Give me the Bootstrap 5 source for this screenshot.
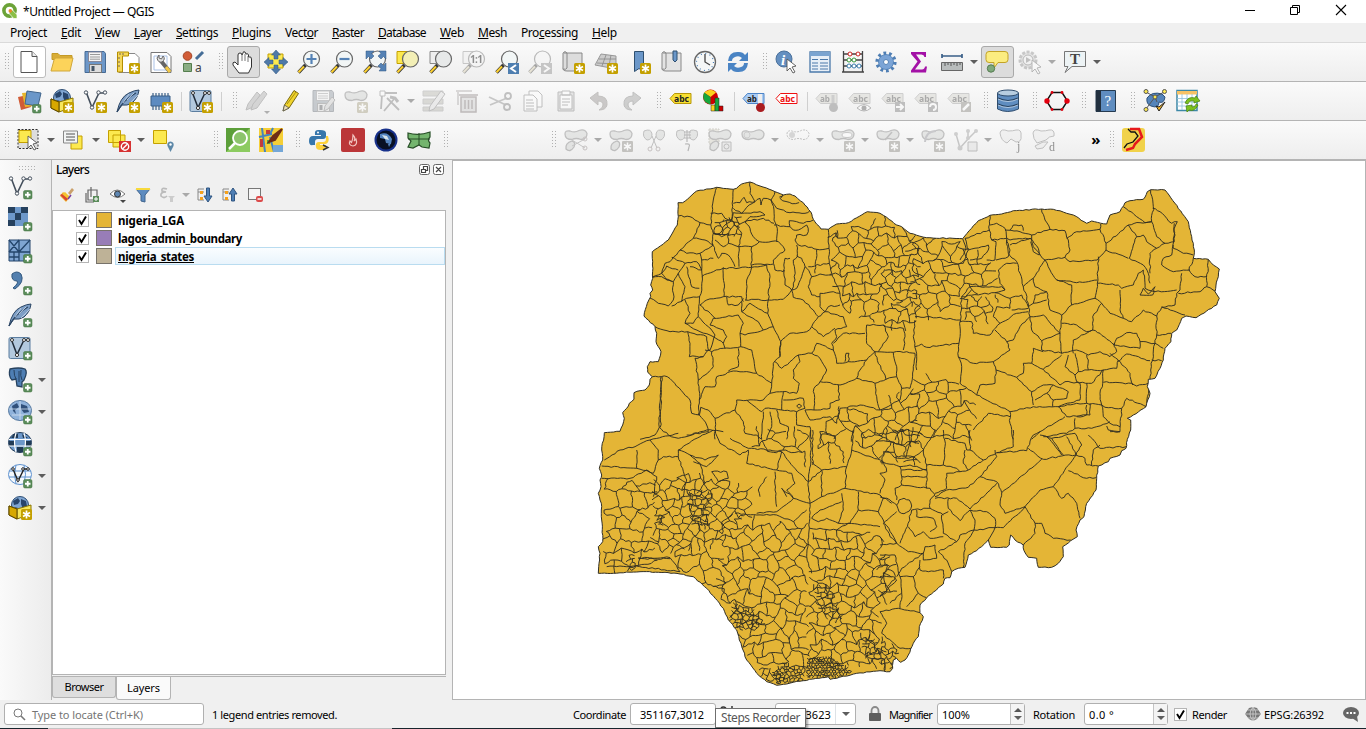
<!DOCTYPE html>
<html lang="en">
<head>
<meta charset="utf-8">
<meta name="viewport" content="width=device-width, initial-scale=1">
<title>*Untitled Project — QGIS</title>
<link href="https://cdn.jsdelivr.net/npm/bootstrap@5.3.0/dist/css/bootstrap.min.css" rel="stylesheet">
<style>
body{height:729px;overflow:hidden;background:#f0f0f0;color:#000;font:12px/16px "Noto Sans","Open Sans",sans-serif}
svg{display:block;overflow:visible}
.titlebar{height:23px;background:#fff}
.winctl svg{width:46px;height:23px}
.menubar{height:20px;padding-left:10px;gap:14px;border-bottom:1px solid #dadada;white-space:nowrap}
.menubar a{color:#000;text-decoration:none}
.fit{display:inline-block;white-space:nowrap}
.tools{height:39px;background:linear-gradient(#fafafa,#eeeeee);border-bottom:1px solid #b4b4b4}
.tool{width:33px;height:32px;padding:0;border:1px solid transparent;border-radius:3px;display:flex;align-items:center;justify-content:center;background:none;flex:none}
.tool svg,.side svg{width:24px;height:24px;flex:none}
.tool.off svg{opacity:.42;filter:grayscale(.8)}
.tool.on{background:#dcdcdc;border-color:#a9a9a9}
.tool.raised{background:#fff;border-color:#bcbcbc}
.grip{width:16px;height:18px;flex:none}
.grip::before,.gripbar{content:"";display:block;background:radial-gradient(circle at .5px .5px,#b0b0b0 .6px,transparent .8px) 0 0/3px 3px}
.grip::before{width:4px;height:18px;margin-left:8px}
.gripbar{width:17px;height:5px;margin:6px 0 0 19px}
.start{width:12.5px;overflow:hidden;display:flex;justify-content:end}
.sep{width:7px;height:19px;flex:none;border-left:1px solid #cfcfcf;margin-left:3px;margin-right:-3px}
.drop{width:12px;flex:none;display:flex;justify-content:center;margin-left:-1px;margin-right:1px}
.drop::after,.tri{content:"";border:4px solid transparent;border-top-color:#5d5d5d;border-bottom:0}
.drop.off::after{border-top-color:#a9a9a9}
.work{height:540px}
.side{width:52px;background:linear-gradient(90deg,#fafafa,#ececec);border-right:1px solid #b4b4b4}
.side .slot{height:32.1px;padding-left:8px}
.side .drop{margin-left:4px}
.dock{width:394px}
.dock h2{font-size:12px;height:20px;margin:0;padding:2px 0 0 4px;line-height:16px}
.docktools{height:30px;padding:0 0 0 7px;gap:9.3px}
.docktools svg{width:16px;height:16px}
.tree{height:465px;background:#fff;border:1px solid #b4b4b4}
.node{height:18px;padding-left:23px}
.chk{width:13px;height:13px;background:#fff;border:1px solid #b5b5b5;flex:none}
.swatch{width:16px;height:16px;border:1px solid #77726a;flex:none;margin:0 3px 0 7px}
.node b{flex:1;height:18px;line-height:17px;padding-left:2px;font-size:11.5px;border:1px solid transparent}
.node.cur b{background:linear-gradient(#fafdff,#e9f4fc);border-color:#b9dcf0}
.tabs{height:25px;border-top:1px solid #b4b4b4;margin-top:1px}
.tabs div{border:1px solid #b4b4b4;border-top:0;border-radius:0 0 3px 3px;font-size:11px;text-align:center}
.canvas{margin-left:6px;background:#fff;border:1px solid #b4b4b4;flex:1;height:540px}
.status{height:27px;font-size:11px;padding:1px 0 0 4px}
.status .fit{padding-top:1px}
.box{height:22px;background:#fff;border:1px solid #b0b0b0;border-radius:3px;flex:none}
.spin{width:14px;height:100%;border-left:1px solid #c4c4c4;background:#f4f4f4;gap:4px}
.up{border:4px solid transparent;border-bottom-color:#555;border-top:0}
.tip{position:absolute;left:715px;top:708px;width:91px;height:20px;background:#fff;border:1px solid #6f6f6f;box-shadow:2px 2px 2px #0005;color:#575757;font-size:12px;line-height:18px;text-align:center}
.taskedge{height:2px;background:linear-gradient(90deg,#17252d 48px,#c4c4c4 48px 392px,#17252d 392px);background-size:100% 1px;background-position:0 100%;background-repeat:no-repeat}
</style>
</head>
<body>
<header>
  <div class="titlebar d-flex align-items-center">
    <svg width="23" height="23" viewBox="0 0 23 23"><circle cx="9.500" cy="10.500" r="5.600" fill="none" stroke="#6ca338" stroke-width="3.600"/><path d="M9.500 10.500l2.500-.8 5 5v3.800h-3.300l-4.500-5z" fill="#8bbf45" stroke="#fff" stroke-width=".7"/><circle cx="10.300" cy="10.900" r="1.800" fill="#e88a2a"/></svg>
    <span class="fit" data-w="131">*Untitled Project — QGIS</span>
    <div class="winctl d-flex ms-auto">
      <svg viewBox="0 0 46 23"><path d="M17 10.500h10" stroke="#000"/></svg>
      <svg viewBox="0 0 46 23"><path d="M16.500 7.500h7v7h-7zM18.500 7.500v-2h7v7h-2" fill="none" stroke="#000"/></svg>
      <svg viewBox="0 0 46 23"><path d="M16 5l10 10M26 5l-10 10" stroke="#000" stroke-width="1.100"/></svg>
    </div>
  </div>
  <nav class="menubar d-flex align-items-center">
    <a class="fit" data-w="37">Pro<u>j</u>ect</a><a class="fit" data-w="20"><u>E</u>dit</a><a class="fit" data-w="25"><u>V</u>iew</a><a class="fit" data-w="28"><u>L</u>ayer</a><a class="fit" data-w="42"><u>S</u>ettings</a><a class="fit" data-w="39"><u>P</u>lugins</a><a class="fit" data-w="33">Vect<u>o</u>r</a><a class="fit" data-w="32"><u>R</u>aster</a><a class="fit" data-w="48"><u>D</u>atabase</a><a class="fit" data-w="24"><u>W</u>eb</a><a class="fit" data-w="29"><u>M</u>esh</a><a class="fit" data-w="57">Pro<u>c</u>essing</a><a class="fit" data-w="25"><u>H</u>elp</a>
  </nav>
  <div class="tools d-flex align-items-center" data-items="^new open save layout layoutmgr style | =pan pansel zoomin zoomout zoomfull zoomsel zoomlayer ~zoom11 zoomlast ~zoomnext newmap new3d bookmark bookmarks clock refresh | identify table abacus gear sigma ruler v =tip ~action V textanno v"></div>
  <div class="tools d-flex align-items-center" data-items="datasource geopackage newshape newquill chip / virtual / | ~pencils pencil ~savedit ~addpoly ~vertex V ~modify ~trash ~cut ~copy ~paste ~undo ~redo | label diagram / labelpin labelred / ~labelpin2 ~labeleye ~labelmove ~labelrot ~labeledit | db | hexagon | help | topology tablerefresh"></div>
  <div class="tools d-flex align-items-center" data-items="select v selform v deselect v selloc _25 | search osm | python fire globe greenmap | _92 | ~blob1 V ~blob2 ~blobcut ~bloblace ~blob3 ~blob4 V ~blob5 V ~blob6 V ~blob7 V ~blob8 ~nodes V ~blobj ~blobd _41 | road"></div>
</header>

<main class="work d-flex">
  <aside class="side"><div class="gripbar"></div><div id="side"></div></aside>
  <section class="dock">
    <h2 class="d-flex"><span class="fit" data-w="33">Layers</span>
      <svg class="ms-auto" style="margin-right:1px;margin-top:2px" width="26" height="12" viewBox="0 0 26 12"><g fill="#fff" stroke="#666"><rect x=".5" y=".5" width="10" height="10" rx="2"/><rect x="14.500" y=".5" width="10" height="10" rx="2"/></g><path d="M2.500 5.500h4v3h-4zM4.500 5V2.500h4v4H7M17 3l5 5M22 3l-5 5" fill="none" stroke="#444" stroke-width="1.200"/></svg></h2>
    <div class="docktools d-flex align-items-center" id="docktools"></div>
    <div class="tree">
      <div class="node d-flex align-items-center"><span class="chk"></span><span class="swatch" style="background:#e4b536"></span><b><span class="fit" data-w="66">nigeria_LGA</span></b></div>
      <div class="node d-flex align-items-center"><span class="chk"></span><span class="swatch" style="background:#987db7"></span><b><span class="fit" data-w="124">lagos_admin_boundary</span></b></div>
      <div class="node cur d-flex align-items-center"><span class="chk"></span><span class="swatch" style="background:#beb297"></span><b><u class="fit" data-w="76">nigeria_states</u></b></div>
    </div>
    <div class="tabs d-flex align-items-start">
      <div style="width:64px;height:21px;background:#dedede;line-height:20px"><span class="fit" data-w="39">Browser</span></div>
      <div style="width:55px;height:23px;background:#fafafa;line-height:22px"><span class="fit" data-w="33">Layers</span></div>
    </div>
  </section>
  <section class="canvas"><svg id="map" width="912" height="538" viewBox="453 161 912 538"></svg></section>
</main>

<footer class="status d-flex align-items-center">
  <div class="box d-flex align-items-center" style="width:200px;padding-left:8px;color:#757575"><svg width="13" height="13" viewBox="0 0 13 13"><circle cx="5" cy="5" r="4" fill="none" stroke="#777"/><path d="M8 8l4 4" stroke="#777" stroke-width="1.600"/></svg><span class="fit" data-w="111" style="margin-left:6px">Type to locate (Ctrl+K)</span></div>
  <span class="fit" data-w="125" style="margin-left:8px">1 legend entries removed.</span>
  <span class="fit" data-w="53" style="margin-left:236px">Coordinate</span>
  <div class="box" style="width:86px;margin-left:4px;line-height:20px;padding-left:9px"><span class="fit" data-w="64">351167,3012</span></div>
  <svg style="margin-left:4px" width="14" height="14" viewBox="0 0 14 14"><path d="M1 1q2-2 5 0M12-1v4" fill="none" stroke="#333" stroke-width="1.500"/></svg>
  <div class="box d-flex align-items-center justify-content-end" style="width:81px;margin-left:41px"><span class="fit" data-w="32">13623</span><span class="d-flex align-items-center justify-content-center h-100 border-start ms-1" style="width:20px"><span class="tri"></span></span></div>
  <svg style="margin-left:12px" width="14" height="16" viewBox="0 0 14 16"><path d="M3.500 8V5a3.500 4 0 0 1 7 0v3" fill="none" stroke="#8a8a8a" stroke-width="1.800"/><rect x="1" y="7" width="12" height="8" rx="1" fill="#5f5f5f"/></svg>
  <span class="fit" data-w="43" style="margin-left:7px">Magnifier</span>
  <div class="box d-flex align-items-center" style="width:88px;margin-left:5px;padding-left:4px"><span class="fit" data-w="28">100%</span><span class="spin ms-auto d-flex flex-column align-items-center justify-content-center"><span class="up"></span><span class="tri"></span></span></div>
  <span class="fit" data-w="42" style="margin-left:8px">Rotation</span>
  <div class="box d-flex align-items-center" style="width:84px;margin-left:9px;padding-left:4px"><span class="fit" data-w="25">0.0 °</span><span class="spin ms-auto d-flex flex-column align-items-center justify-content-center"><span class="up"></span><span class="tri"></span></span></div>
  <span class="chk" style="margin-left:6px"></span>
  <span class="fit" data-w="35" style="margin-left:5px">Render</span>
  <svg style="margin-left:18px" width="16" height="14" viewBox="0 0 16 14"><path d="M8 0l4 1 4 6-4 5-4 2-4-2-4-5 4-6z" fill="#777"/><path d="M0 7h16M8 0v14M3 3h10M3 11h10M8 0Q2 7 8 14Q14 7 8 0" fill="none" stroke="#ddd" stroke-width=".7"/></svg>
  <span class="fit" data-w="60" style="margin-left:3px">EPSG:26392</span>
  <svg style="margin-left:19px" width="16" height="16" viewBox="0 0 16 16"><ellipse cx="8" cy="7" rx="8" ry="6" fill="#666"/><path d="M9 12l6 4-1-6z" fill="#666"/><path d="M3.500 7h2M7 7h2M10.500 7h2" stroke="#fff" stroke-width="2"/></svg>
</footer>
<div class="taskedge"></div>
<div class="tip"><span class="fit" data-w="79">Steps Recorder</span></div>

<script src="https://cdn.jsdelivr.net/npm/bootstrap@5.3.0/dist/js/bootstrap.bundle.min.js"></script>
<script>
// ---- icon parts, all on a 24 x 24 grid ----
const star='<rect x="13" y="13" width="11" height="11" rx="1.500" fill="#c4a000"/><path d="M18.500 14.500v8M15 16.500l7 4M22 16.500l-7 4" stroke="#fff" stroke-width="1.700"/>';
const plus='<rect x="15.500" y="15.500" width="8.500" height="8.500" rx="1.500" fill="#5a8c5a" stroke="#40703f" stroke-width=".5"/><path d="M19.750 17v5.500M17 19.750h5.500" stroke="#fff" stroke-width="1.800"/>';
const lens=(f='#f2f6f6')=>`<path d="M1.500 22.500L8.500 15" stroke="#333" stroke-width="3.400"/><path d="M1.500 22.300L7 16.500" stroke="#fcd030" stroke-width="2"/><circle cx="14.500" cy="9" r="8" fill="${f}" stroke="#666" stroke-width="1.200"/>`;
const tag=(t,f,s,c)=>`<path d="M1 9.500L5.500 4.500H22v10H5.500z" fill="${f}" stroke="${s}"/><text x="5" y="12.500" font-family="Noto Sans" font-weight="bold" font-size="8.500" fill="${c}" textLength="${t.length*5}" lengthAdjust="spacingAndGlyphs">${t}</text>`;
const vee='<path d="M3.500 4L9 18.500 16 4h6" fill="none" stroke="#444f5c" stroke-width="1.600"/><g fill="#fff" stroke="#444f5c"><circle cx="3" cy="3.500" r="1.700"/><circle cx="9" cy="18.500" r="1.700"/><circle cx="15.500" cy="3.500" r="1.700"/><circle cx="22" cy="3.500" r="1.700"/></g>';
const quill='<path d="M1 23Q4 8 13 4 19 1 23 1 22 9 16 14 11 17 6 16z" fill="#7e9fc6" stroke="#2b4564"/><path d="M1 23Q7 11 20 4" fill="none" stroke="#2b4564" stroke-width="1.200"/><path d="M7 14L13 5M11 11l7-7M13 15l9-9" stroke="#c9d9eb" stroke-width=".8"/>';
const vbox='<rect x="1" y="1.500" width="21" height="21" rx="1.500" fill="#b3c9de" stroke="#5b7d9f"/><path d="M3.500 4L9 18.500 16 4h4" fill="none" stroke="#222d3a" stroke-width="1.500"/><g fill="#fff" stroke="#333"><circle cx="4" cy="4" r="1.500"/><circle cx="9" cy="19" r="1.600"/><circle cx="16" cy="4" r="1.500"/><circle cx="20" cy="4" r="1.500"/></g>';
const earth='<circle cx="12" cy="9" r="8.500" fill="#7fa5d2" stroke="#2f4f74"/><path d="M5 5l5-3 2 3-2 3-4 1zM13 3l5 2 1 5-4 3-2-5zM7 11l3 1-1 4z" fill="#28456b"/>';
const pkg=earth+'<path d="M1 10l8 3v10l-8-4z" fill="#d7a800" stroke="#5f4b00"/><path d="M1 10l8 3 14-4v9L9 23V13" fill="#f7e75c" stroke="#8a7400"/><path d="M1 10l8 3v10l-8-4z" fill="#d7a800" stroke="#5f4b00"/>';
const cursor=(x,y)=>`<path transform="translate(${x} ${y})" d="M0 0v12l3-3 3 5 2-1-3-5 4-1z" fill="#fff" stroke="#555" stroke-width=".9"/>`;
const grid='<path d="M1 1h21v21H1z" fill="#7fa5d2" stroke="#24456b"/>';
const blob='<path d="M1 6Q1 2 6 3q5 2 9-.5 6-2 8 3 0 6-6 6-5-2-9 0-7 0-7-5.500z" fill="#c9cfc9" stroke="#777" stroke-width="1.300"/>';
const leg='<path d="M8 13q-7 2-6 8 4 4 8-2 2-5-2-6z" fill="#c9cfc9" stroke="#777" stroke-width="1.300"/>';
const cutr='<path d="M8 18L21 11M8 12l13 8" stroke="#888"/><circle cx="21" cy="11" r="2" fill="none" stroke="#a77"/><circle cx="21" cy="20" r="2" fill="none" stroke="#a77"/>';
const gold='<rect x="13" y="13" width="11" height="11" rx="1" fill="#8b8360"/><path d="M18.500 14.500v8M15 16.500l7 4M22 16.500l-7 4" stroke="#fff" stroke-width="1.500"/>';
const floppy='<path d="M2 1.500h19l1.500 2v19H2z" fill="#6d97c8" stroke="#456a94"/><rect x="5.500" y="2" width="13" height="9.500" fill="#f4f4f4" stroke="#889"/><path d="M7 4.500h10M7 7h10M7 9.200h10" stroke="#999"/><rect x="6.500" y="14.500" width="12" height="8" fill="#ddd" stroke="#777"/><rect x="8.500" y="16" width="3" height="5" fill="#456"/>';
const pen='<path d="M5 22l1.500-6L16 1.500l4.500 3L11 19z" fill="#f0d32c" stroke="#7a6a10"/><path d="M5 22l1.500-6 4.500 3z" fill="#eee0b8" stroke="#555" stroke-width=".8"/><path d="M9 15L18 3" stroke="#a88f10"/>';
const I={
new:'<path d="M4 1.500h11l5 5v16H4z" fill="#fff" stroke="#555"/><path d="M15 1.500v5h5" fill="#eee" stroke="#555"/>',
open:'<path d="M2 3.500h6l2 2h12v4H2z" fill="#d9ad36" stroke="#c49a27"/><path d="M1 21l3-11q0-2 2-2h17l-3 13z" fill="#fcd35a" stroke="#d0a73a"/>',
save:floppy,
layout:'<path d="M3 3.500h16l4 4v15H3z" fill="#fff" stroke="#888"/><path d="M1.500 2h11v4h-6v16h-5z" fill="#f5d85a" stroke="#b48e00"/><path d="M4 3v2M7 3v2M2 8h2M2 12h2M2 16h2" stroke="#765"/>'+star,
layoutmgr:'<path d="M2 2.500h16l4 4v16H2z" fill="#fff" stroke="#777"/><path d="M5 6h13v14H5z" fill="none" stroke="#a9c1e6"/><path d="M12 11l9 11" stroke="#666" stroke-width="4"/><path d="M17 17l4 5" stroke="#f3c948" stroke-width="3"/><path d="M8 8q1 5 5 4 4-3 1-6l-1.500 3-2.500-1 0-3z" fill="#ddd" stroke="#666"/>',
style:'<circle cx="5.500" cy="6" r="4.300" fill="#d15c37" stroke="#a34425"/><path d="M14 9l7-7" stroke="#456d97" stroke-width="3"/><path d="M1.500 13.500h8v8h-8z" fill="#8aad83" stroke="#547e4d"/><text x="13" y="22" font-size="12" font-family="Noto Sans" fill="#444">a</text>',
pan:'<path d="M8 23L2 15Q1 12 4 12l3 3V5q0-2 2-2t2 2l1-2q0-2 2-1l1 2q2-1 2.500 1v2q3-1 3 2v8l-3 6z" fill="#fff" stroke="#333"/><path d="M11 4v7M14 4v7M17 6v6" stroke="#555" stroke-width=".8"/>',
pansel:'<path d="M4 4h15v14H4z" fill="#fce94f" stroke="#c4a000"/><g fill="#4f79a8" stroke="#2f5581" stroke-width=".5"><path d="M12 0l4.500 5h-2.500v4h-4V5H7.500zM12 24l4.500-5h-2.500v-4h-4v4H7.500zM0 12l5-4.500V10h4v4H5v2.500zM24 12l-5-4.500V10h-4v4h4v2.500z"/></g>',
zoomin:lens()+'<path d="M14.500 4v10M9.500 9h10" stroke="#5582b5" stroke-width="2.200"/>',
zoomout:lens()+'<path d="M9.500 9h10" stroke="#5582b5" stroke-width="2.200"/>',
zoomfull:lens()+'<g fill="#5582b5" stroke="#2f5581" stroke-width=".5"><path d="M3 1h8L8.500 3.500 11 6 8 9 5.500 6.500 3 9zM23 1h-7l2 2.500L15 6l3 3 2.500-2.500L23 9zM23 21h-7l2-2.500-3-2.500 3-3 2.500 2.500L23 13z"/></g>',
zoomsel:'<path d="M1 1.500h14v12H1z" fill="#fce94f" stroke="#c4a000"/>'+lens('#f3efb6'),
zoomlayer:'<path d="M1 1.500h14v12H1z" fill="#eee" stroke="#888"/>'+lens('#e7e9e9'),
zoom11:'<path d="M1 1.500h14v12H1z" fill="#eee" stroke="#888"/>'+lens()+'<text x="8" y="13" font-size="10" font-weight="bold" font-family="Noto Sans" textLength="13">1:1</text>',
zoomlast:lens()+'<path d="M13 13h11v11H13z" fill="#4e7eb0"/><path d="M21 15l-5 3.500 5 3.500" fill="none" stroke="#fff" stroke-width="2"/>',
zoomnext:lens()+'<path d="M13 13h11v11H13z" fill="#888"/><path d="M16 15l5 3.500-5 3.500" fill="none" stroke="#fff" stroke-width="2"/>',
newmap:'<path d="M3 3h18v18H6q-5 0-4-4V3q2-3 4 0v15q-1 2-4 1" fill="#ddd" stroke="#888"/>'+star,
new3d:'<path d="M7 4l15 2v13L1 15z" fill="#ccc" stroke="#999"/><path d="M5 9h17M3 13l19 1M12 5L8 16M17 5l-2 11" stroke="#888" stroke-width=".8"/>'+star,
bookmark:'<path d="M7.500 1.500h9v20l-4.500-3-4.500 3z" fill="#6b97c9" stroke="#2f5070"/>'+star,
bookmarks:'<path d="M3 3h18v18H6q-5 0-4-4V3q2-3 4 0v15q-1 2-4 1" fill="#e3e3e3" stroke="#888"/><path d="M13 1h4v9l-2 2-2-2z" fill="#6b97c9" stroke="#2f5070"/>',
clock:'<circle cx="12" cy="12" r="10.500" fill="#f5f7f7" stroke="#666" stroke-width="1.300"/><circle cx="12" cy="12" r="8.500" fill="none" stroke="#4c7fb5" stroke-width="1.200" stroke-dasharray="1 3.450"/><path d="M12 4v8l5 3" fill="none" stroke="#444" stroke-width="1.300"/>',
refresh:'<path d="M2 11Q3 1 13 2q4 0 6 3l3-3v9h-9l3-3q-3-3-7-1-3 1-3 4zM22 13q-1 10-11 9-4 0-6-3l-3 3v-9h9l-3 3q3 3 7 1 3-1 3-4z" fill="#4a84c4"/>',
identify:'<circle cx="9" cy="9" r="8" fill="#648fc0" stroke="#4b719b"/><text x="6" y="14.500" font-size="15" font-family="Liberation Serif" font-style="italic" font-weight="bold" fill="#fff">i</text>'+cursor(12,9),
table:'<path d="M2 2h20v20H2z" fill="#e8eff7" stroke="#4b79aa" stroke-width="1.300"/><path d="M2 2h20v4H2z" fill="#7ba4d0"/><path d="M4 9.500h6M12 9.500h8M4 13h6M12 13h8M4 16h6M12 16h8M4 19h6M12 19h8" stroke="#4b79aa"/>',
abacus:'<path d="M2.500 1v21M21.500 1v21M1 22h22M3 4h18M3 10h18M3 16h18" stroke="#444" stroke-width="1.300"/><g fill="#fff"><g stroke="#c22"><circle cx="9" cy="4" r="2"/><circle cx="17" cy="4" r="2"/></g><g stroke="#3a9a3a"><circle cx="8" cy="10" r="2"/><circle cx="13" cy="10" r="2"/></g><g stroke="#3c7fb0"><circle cx="8" cy="16" r="2"/><circle cx="13" cy="16" r="2"/><circle cx="18" cy="16" r="2"/></g></g>',
gear:'<circle cx="12" cy="12" r="8.800" fill="none" stroke="#4e7eb4" stroke-width="3.600" stroke-dasharray="2.700 2.830"/><circle cx="12" cy="12" r="5" fill="#f3f6fa" stroke="#7ba4d6" stroke-width="5"/><circle cx="12" cy="12" r="7.500" fill="none" stroke="#4e7eb4" stroke-width=".8"/><circle cx="12" cy="12" r="2.500" fill="#fff" stroke="#4e7eb4"/>',
sigma:'<path d="M4 2h15v5h-1.500q-.5-2.500-3-2.500H9l5 7-6 8h7q2.500 0 3-3H20l-1 6H4v-2l6.500-9L4 4z" fill="#a311a6"/>',
ruler:'<path d="M2 6h20M2 4v4M22 4v4" stroke="#3a5f88" stroke-width="1.700"/><path d="M1.500 12.500h21v8h-21z" fill="#b9bdbd" stroke="#666"/><path d="M5 13v3M8 13v2M11 13v3M14 13v2M17 13v3M20 13v2" stroke="#555"/>',
tip:'<path d="M4 1.500h16q3 0 3 3v5q0 3-3 3h-7L9 18v-5.500H4q-3 0-3-3v-5q0-3 3-3z" fill="#fbec80" stroke="#c3a326"/><circle cx="6" cy="18.500" r="3.700" fill="#7fa97b" stroke="#567c52"/>',
action:'<circle cx="10" cy="10" r="8" fill="#ccc" stroke="#888" stroke-width="3" stroke-dasharray="3 1.500"/><circle cx="10" cy="10" r="5" fill="#eee" stroke="#666"/><path d="M8 7l5 3-5 3z" fill="#777"/>'+cursor(14,10),
textanno:'<path d="M1.500 1.500h21v15H9l-7 6 3-6H1.500z" fill="#edf3f5" stroke="#777"/><text x="7" y="14" font-family="Liberation Serif" font-weight="bold" font-size="15" fill="#444">T</text>',
datasource:'<path d="M1 8l10-2 3 12-10 3z" fill="#d15c37"/><path d="M5 4l11-1 1 14-9 1z" fill="#e8b62c"/><path d="M10 2l14 2-3 13-13-2z" fill="#6b97c9" stroke="#41658c"/>'+plus,
geopackage:pkg+star,newshape:vee+star,newquill:quill+star,
chip:'<path d="M4 4v17M7 4v17M10 4v17M13 4v17M16 4v17M19 4v17" stroke="#3b5f86" stroke-width="1.200"/><path d="M2 7h19v10H2z" fill="#5d8bc0" stroke="#3b5f86"/>'+star,
virtual:vbox+star,
pencils:'<g fill="#aaa" stroke="#777"><path d="M1 21l2-6 9-12 3 3-9 13z"/><path d="M6 21l2-6 11-13 3 3-10 14z"/></g><path d="M19 22h6l-3 3z" fill="#555"/>',
pencil:pen,
savedit:floppy+'<path d="M13 22l1-5 7-9 3 3-7 9z" fill="#ccc" stroke="#777"/>',
addpoly:blob+star,
vertex:'<path d="M4 20L5 6M6 4h14M7 22L17 10M10 9l12 12" stroke="#777" stroke-width="1.800"/><path d="M13 8l5 1 3 4" fill="none" stroke="#777" stroke-width="3"/><path d="M3 2h5v5H3z" fill="#fff" stroke="#777"/>',
modify:'<path d="M1 2h20v5H1zM1 10h20v5H1zM1 18h20v4H1z" fill="#bbb68d" stroke="#999"/><path d="M7 22l1-5L19 2l4 3-11 15z" fill="#ddd" stroke="#777"/>',
trash:'<path d="M1 2h16M3 2v14" stroke="#baa" stroke-width="2"/><path d="M6 8h15v15H6zM4 6h19" fill="#ccc" stroke="#966" stroke-width="1.500"/><path d="M10 11v9M13.500 11v9M17 11v9" stroke="#966" stroke-width="1.500"/>',
cut:'<path d="M1 8l17 8M2 16l17-7" stroke="#888" stroke-width="1.800"/><g fill="none" stroke="#777" stroke-width="1.800"><circle cx="20" cy="7" r="3"/><circle cx="19" cy="18" r="3"/></g>',
copy:'<path d="M8 2h9l4 4v12H8z" fill="#fff" stroke="#777"/><path d="M3 6h9l4 4v12H3z" fill="#fff" stroke="#777"/><path d="M5 11h7M5 14h8M5 17h8M5 20h8" stroke="#777"/>',
paste:'<path d="M4 3h16v19H4z" fill="#ccc" stroke="#777"/><path d="M6 6h12v14H6zM8 2h8v4H8z" fill="#fff" stroke="#777"/><path d="M8 10h8M8 13h8M8 16h6" stroke="#777"/>',
undo:'<path d="M3 9l8-6v4q10 0 9 9-1 5-8 5 4-2 4-5 0-4-5-4v4z" fill="#a08b80" stroke="#876"/>',
redo:'<path d="M21 9l-8-6v4Q3 7 4 16q1 5 8 5-4-2-4-5 0-4 5-4v4z" fill="#9a9d92" stroke="#777"/>',
label:tag('abc','#f7df32','#b79709','#222'),labelred:tag('abc','#fff','#e11','#e11'),
labelpin:tag('ab','#a9cbf3','#4d84c7','#222')+'<path d="M18 5v10" stroke="#eee" stroke-width="4"/><circle cx="18.500" cy="18.500" r="4.500" fill="#a91c20"/>',
labelpin2:tag('ab','#d8d3a8','#999','#444')+'<path d="M18 6v9" stroke="#999" stroke-width="3"/><circle cx="18.500" cy="18.500" r="4.500" fill="#777"/>',
labeleye:tag('abc','#d8d3a8','#999','#444')+'<path d="M9 19q7-7 14 0-7 6-14 0z" fill="#fff" stroke="#666"/><circle cx="16" cy="19" r="2.500" fill="#555"/>',
labelmove:tag('abc','#d8d3a8','#999','#444')+'<path d="M14 13h10v10H14z" fill="#777"/><path d="M15 18h7M19 15l3 3-3 3" stroke="#fff" fill="none" stroke-width="2"/>',
labelrot:tag('abc','#d8d3a8','#999','#444')+'<path d="M14 13h10v10H14z" fill="#777"/><path d="M16 18a3 3 0 1 1 3 3" stroke="#fff" fill="none" stroke-width="2"/>',
labeledit:tag('abc','#d8d3a8','#999','#444')+'<path d="M14 13h10v10H14z" fill="#8b8360"/><path d="M16 21l6-6" stroke="#fff" stroke-width="2.500"/>',
diagram:'<circle cx="8.500" cy="8" r="7.500" fill="#c00"/><path d="M8.500 8L2 3.500Q9-2 14 3.500z" fill="#fbd21c"/><path d="M8.500 8v7.500Q-1 13 2 3.500z" fill="#18a73c"/><g stroke="#222" stroke-width=".5"><path d="M9 16h4v6H9z" fill="#fbd21c"/><path d="M13 9h4v13h-4z" fill="#18a73c"/><path d="M17 17h4v5h-4z" fill="#c00"/></g>',
db:'<path d="M1.500 4v16q10 5 21 0V4" fill="#5f8dc0" stroke="#2f4d6e"/><ellipse cx="12" cy="4" rx="10.500" ry="3" fill="#b7cde0" stroke="#2f4d6e"/><path d="M2 9q10 5 20 0M2 15q10 5 20 0" fill="none" stroke="#26415e" stroke-width="1.200"/><path d="M2 10q10 5 20 0M2 16q10 5 20 0" fill="none" stroke="#c5d6e8" stroke-width=".8"/>',
hexagon:'<path d="M7 3.500h10L22.500 12 17 20.500H7L1.500 12z" fill="none" stroke="#111" stroke-width="1.400"/><g fill="#e3000f"><circle cx="2" cy="12" r="2.700"/><circle cx="22" cy="12" r="2.700"/><circle cx="7" cy="3.500" r="1.400"/><circle cx="17" cy="3.500" r="1.400"/><circle cx="7" cy="20.500" r="1.400"/><circle cx="17" cy="20.500" r="1.400"/></g>',
help:'<path d="M2 1.500h19.500v21H2z" fill="#5f8dc0" stroke="#253a50"/><path d="M2 1.500h5v21H2z" fill="#22303f"/><text x="10.500" y="17" font-size="15" font-family="Liberation Serif" fill="#fff">?</text>',
topology:'<path d="M4 9Q9 2 19 5l3 3q-1 7-6 5 0 7-8 4-5-2-4-8z" fill="#5484ba" stroke="#2d527c"/><path d="M3 3l9 5M21 3l-9 5-9 12M12 8l2 5" fill="none" stroke="#555"/><g fill="#fce94f" stroke="#555"><circle cx="3" cy="2.500" r="2"/><circle cx="21.500" cy="2.500" r="2"/><circle cx="12" cy="8" r="2"/><circle cx="3" cy="20.500" r="2"/></g><path d="M13 17l3 5 6-9-6 5z" fill="#f7b929" stroke="#222"/>',
tablerefresh:'<path d="M1 1.500h20v20H1z" fill="#fff" stroke="#3c88a7" stroke-width="1.500"/><path d="M1 2h20v3.500H1z" fill="#f6c266"/><path d="M1 9.500h20M1 13h20M1 17h20M6 5v16M11 5v16M16 5v16" stroke="#8fc0dc" stroke-width=".8"/><path d="M9 14q3-7 10-5l1-2 4 5-6 2v-2q-5-1-6 3zM22 16q-3 7-9 5l-2 2-1-6 6-1v2q4 0 4-3z" fill="#7cc21e" stroke="#47800f" stroke-width=".7"/>',
select:'<path d="M1 1.500h20v19H1z" fill="#ddd" stroke="#333" stroke-dasharray="2 1.500"/><path d="M2 2.500h12v12H2z" fill="#fce94f" stroke="#c4a000"/>'+cursor(11,8),
selform:'<path d="M9 8h11v13H9z" fill="#fce94f" stroke="#c4a000"/><path d="M1.500 3h14v12h-14z" fill="#f2f4f4" stroke="#888"/><path d="M4 6h9M4 9h9M4 12h9" stroke="#888" stroke-width="1.300"/>',
deselect:'<path d="M1.500 2.500h12v12h-12zM6 7h12v12H6z" fill="#fce94f" stroke="#c4a000"/><path d="M12 13h12v11H12z" fill="#d63232"/><circle cx="18" cy="18.500" r="3.700" fill="#d63232" stroke="#fff" stroke-width="1.400"/><path d="M15.500 21l5-5" stroke="#fff" stroke-width="1.400"/>',
selloc:'<path d="M1.500 2.500h13v13h-13z" fill="#fce94f" stroke="#c4a000"/><path d="M18.500 24l-3-6q-1-4 3-4.500 4 .5 3 4.500z" fill="#5d88a8"/><circle cx="18.500" cy="16.500" r="1.200" fill="#fff"/>',
search:'<path d="M0 0h24v24H0z" fill="#8ccb60"/><path d="M0 0h24L0 24z" fill="#5c9f3a"/><circle cx="14" cy="10" r="7" fill="#8cc46c" stroke="#fff" stroke-width="1.800"/><path d="M9 15l-6 6" stroke="#fff" stroke-width="2.500"/>',
osm:'<path d="M0 0h24v24H0z" fill="#f5cf37"/><path d="M3 0l3 24M0 9l13-3M11 9l4 15M14 0l-3 6" stroke="#4584bd" stroke-width="2"/><path d="M1 11h3v8H1zM7 2h4v4H7z" fill="#c33c3c"/><path d="M14 17h10v7H14z" fill="#74a7d7"/><path d="M8 12h3v4H8z" fill="#54a04a"/><path d="M10 14L14 8 23 1 16 12z" fill="#6e2d16" stroke="#6e2d16" stroke-width="2"/>',
python:'<path d="M12 2c-6 0-5 2-5 5h6v1H5q-4 0-4 5t4 4h2v-3q0-3 3-3h5q3 0 3-3V5q0-3-6-3z" fill="#3776ab"/><path d="M13 22c6 0 5-2 5-5h-6v-1h6q4-2 2-8h-2v3q0 3-3 3h-4q-4 0-3 5 0 3 5 3z" fill="#fdd13b"/><circle cx="10" cy="4.500" r="1" fill="#fff"/><path d="M15 17l5 2.500-5 2.500" fill="none" stroke="#333" stroke-width="1.400"/>',
fire:'<rect width="24" height="24" rx="2" fill="#bb3638"/><path d="M12 7q3 3 1 6l2-2q2 6-3 7-5-1-3-5l1.500 1.500q1.500-3 1.500-7.500z" fill="none" stroke="#f2c5c0" stroke-width="1.200"/>',
globe:'<circle cx="12" cy="12" r="11.500" fill="#18318b"/><circle cx="12" cy="12" r="9.500" fill="#081023"/><path d="M6 6q8-3 12 5l-1 5-5-1-1-4-5-1zM14 16l3-1-2 4z" fill="#5585c0"/><path d="M8 7l5 1 2 4-4-1z" fill="#d9e5ea"/>',
greenmap:'<path d="M1 5q11 3 22-1v5q-3 3 0 6l-1 5-7-1-3-2-6 3-5-1 3-6-3-3z" fill="#74b56e" stroke="#264d26" stroke-width="1.200"/><path d="M12 5v12M1 11h22" stroke="#264d26"/>',
blob1:blob+leg+cutr,blob2:blob+leg+gold,
blobcut:'<path d="M2 3q7-3 8 3 0 6-5 6-5-3-3-9zM22 3q-7-3-8 3 0 6 5 6 5-3 3-9z" fill="#c9cfc9" stroke="#777"/><path d="M10 8l5 12M14 8L9 20" stroke="#777"/><circle cx="8" cy="21" r="2" fill="none" stroke="#a77"/><circle cx="16" cy="21" r="2" fill="none" stroke="#a77"/>',
bloblace:'<path d="M2 3q8-3 8 3 0 6-5 6-5-3-3-9zM22 3q-8-3-8 3 0 6 5 6 5-3 3-9z" fill="#c9cfc9" stroke="#777"/><path d="M9 4h7M9 7h7M9 10h7M12 2v12M10 16q6-1 4 3l-1 4" fill="none" stroke="#666" stroke-width="1.200"/>',
blob3:'<path d="M1 1h10v15H1z" fill="#ded28a" stroke="#a99a50" stroke-dasharray="2 1"/>'+blob+leg+'<path d="M14 14h9v9h-9z" fill="#ddd" stroke="#777"/><circle cx="18.500" cy="18.500" r="2.500" fill="none" stroke="#777"/>',
blob4:blob+'<circle cx="6" cy="7" r="3" fill="none" stroke="#999"/>',
blob5:'<path d="M1 6Q1 2 6 3q5 2 9-.5 6-2 8 3 0 6-6 6-5-2-9 0-7 0-7-5.500z" fill="none" stroke="#777" stroke-dasharray="2 1"/><circle cx="6" cy="7" r="3" fill="#aaa"/>',
blob6:blob+'<ellipse cx="16" cy="7" rx="5" ry="2.500" fill="#fff" stroke="#888"/>'+gold,blob7:blob+'<path d="M9 12l7-8" stroke="#777" stroke-width="1.500"/>'+gold,blob8:blob+'<path d="M4 14Q5 3 15 3" fill="none" stroke="#88a" stroke-width="2"/>'+gold,
nodes:'<path d="M2 6l4 14 8-9 8-8M14 3v8" fill="none" stroke="#888" stroke-width="1.500"/><g fill="#999"><circle cx="2" cy="6" r="2"/><circle cx="6" cy="20" r="2.500"/><circle cx="14" cy="10" r="2"/><circle cx="14" cy="3" r="2"/><circle cx="22" cy="3" r="2"/></g><path d="M14 14h9v9h-9z" fill="#ddd" stroke="#777"/>',
blobj:'<path d="M1 5q1-5 8-2 5 0 8-1 6-1 5 6 1 6-5 6l-5-3-4 4Q2 13 1 5z" fill="#e8e8e8" stroke="#777"/><text x="18" y="22" font-family="Liberation Serif" font-size="12">j</text>',
blobd:'<path d="M1 5q1-5 8-2 5 0 8-1 6-1 5 6-5 0-8 4l-9 3Q1 11 1 5zM3 18l8-4 5 0-5 6-6 1z" fill="#e8e8e8" stroke="#777"/><text x="17" y="23" font-family="Liberation Serif" font-size="12">d</text>',
road:'<rect width="23" height="24" rx="3" fill="#f1d24a"/><path d="M8 1h9l3 8-7 7-2 4-7 2" fill="none" stroke="#e6191b" stroke-width="2.500"/><path d="M6 1l3 3h4l3 4-5 6-6 2-3 4" fill="none" stroke="#111" stroke-width="1.300"/>',
addraster:'<path d="M0 0h20v19H0z" fill="#6d98ca"/><path d="M0 0h7v6H0zM13 0h7v6h-7zM7 6h6v7H7zM0 13h7v6H0z" fill="#26415e"/>'+plus,
addmesh:grid+'<path d="M1 13h21M11 1v21M1 1l10 12M11 1L1 13M22 1L11 13M6 13v9M1 18h10" stroke="#24456b" stroke-width="1.300"/>'+plus,
comma:'<path d="M4 3q5-4 9 0 4 8-6 15l-2-1q6-5 4-7-6 0-5-7z" fill="#537fae" stroke="#31577e"/>'+plus,
addvec:vee+plus,addquill:quill+plus,addvirt:vbox+plus,
elephant:'<path d="M2 1q9-2 15 0 3 3-1 11l-2 2v5l-5-1-1-7-4 1Q0 8 2 1z" fill="#4e7eb3" stroke="#26415e" stroke-width="1.300"/><path d="M6 2q0 6 2 9M13 2q-1 6 1 10M11 3v11" fill="none" stroke="#26415e"/>'+plus,
wms:'<ellipse cx="12" cy="10.500" rx="11.500" ry="10" fill="#8fb2db" stroke="#56799f"/><path d="M4 6l5-3 2 4-4 3 1 4-3-3zM13 4l6 2 2 6-5 1-3-4z" fill="#30507a"/><path d="M1 9h22M12 1v19M4 15h16" stroke="#d2e0ef" stroke-width=".8"/>'+plus,
wcs:'<ellipse cx="12" cy="10.500" rx="11.500" ry="10" fill="#6d98ca" stroke="#203a56"/><path d="M6 2h4v4H3zM14 2l6 4h-5zM1 9h6v5H1zM17 9h6v5h-6zM9 15h6v5H9z" fill="#203a56"/><path d="M1 7.500h22M1 14h22M8 1q-3 9 0 19M16 1q3 9 0 19" fill="none" stroke="#fff" stroke-width="1.200"/>'+plus,
wfs:'<ellipse cx="12" cy="10.500" rx="11.500" ry="10" fill="#f5f9fd" stroke="#5f92cf"/><path d="M1 7h22M1 13h22M8 1q-3 9 0 19M16 1q3 9 0 19" fill="none" stroke="#5f92cf"/><path d="M5 5l5 12 6-12h4" fill="none" stroke="#222" stroke-width="1.400"/><g fill="#fff" stroke="#222"><circle cx="5" cy="5" r="1.300"/><circle cx="10" cy="16" r="1.300"/><circle cx="15" cy="5" r="1.300"/><circle cx="20" cy="5" r="1.300"/></g>'+plus
};
const svg=(n,vb='0 0 24 24')=>`<svg viewBox="${vb}">${I[n]}</svg>`;
document.querySelectorAll('[data-items]').forEach(bar=>{
  bar.innerHTML='<span class="start"><span class="grip"></span></span>'+bar.dataset.items.split(' ').map(t=>{
    if(t==='|')return '<span class="grip"></span>';
    if(t==='/')return '<span class="sep"></span>';
    if(t==='v'||t==='V')return `<span class="drop ${t==='V'?'off':''}"></span>`;
    if(t==='_41')return '<span class="text-end fw-bold" style="width:41px;font-size:15px;padding:0 1px 2px 0">»</span>';
    if(t[0]==='_')return `<span style="width:${t.slice(1)}px"></span>`;
    const c={'~':'off','=':'on','^':'raised'}[t[0]]||'';
    return `<button class="tool ${c}">${svg(c?t.slice(1):t)}</button>`;
  }).join('');
});
document.getElementById('side').innerHTML='addvec addraster addmesh comma addquill addvirt elephant+ wms+ wcs wfs+ geopackage+'.split(' ').map(t=>`<div class="slot d-flex align-items-center">${svg(t.replace('+',''))}${t.endsWith('+')?'<span class="drop"></span>':''}</div>`).join('');
// small icons of the Layers dock, 16 x 16
document.getElementById('docktools').innerHTML=[
'<path d="M9 6l4-5 2 2-4 5z" fill="#caa06a"/><path d="M4 5l7 5-4 5-6-6z" fill="#f4c430"/><path d="M1 8l6 6 3-3-5-5z" fill="#d9472e"/><path d="M3 7l6 5 2-2-5-5z" fill="#f4c430"/><path d="M9 12l3-4" stroke="#7a3ea0" stroke-width="1.500"/>',
'<path d="M4 3h9v10H4zM2 6v9h8M7 0v10" fill="none" stroke="#666" stroke-width="1.200"/><path d="M9 9h6v6H9z" fill="#5a8c5a"/><path d="M12 10v4M10 12h4" stroke="#fff"/>',
'<path d="M0 7q7-8 15 0-7 7-15 0z" fill="#fff" stroke="#777"/><circle cx="7.500" cy="7" r="3" fill="#5d86b3" stroke="#333"/><path d="M10 13h6l-3 3z" fill="#444"/>',
'<path d="M1 2h14l-5 6v7l-4-1V8z" fill="#5d8bc0" stroke="#40658e"/><path d="M1 1h14v2H1z" fill="#f7d93c"/>',
'<path d="M7 2Q1 0 2 4l4 1Q0 5 1 9q3 3 6 0" fill="none" stroke="#bbb" stroke-width="1.700"/><path d="M8 9h7l-2 2v4h-3v-4z" fill="#ccc"/>',0,
'<path d="M1 2v11h6M1 5h6M1 2h6" fill="none" stroke="#888"/><path d="M3 4h3v3H3zM3 10h3v3H3z" fill="#f6a11c"/><path d="M9.500 1h3v8h2.500l-4 6-4-6h2.500z" fill="#4f7fb5" stroke="#2f5581"/>',
'<path d="M1 2v11h6M1 5h6M1 2h6" fill="none" stroke="#888"/><path d="M3 4h3v3H3zM3 10h3v3H3z" fill="#f6a11c"/><path d="M9.500 14h3V7h2.500l-4-6-4 6h2.500z" fill="#4f7fb5" stroke="#2f5581"/>',
'<rect x="1.500" y="1.500" width="12" height="11" fill="#f5f5f5" stroke="#777"/><rect x="9" y="9" width="7" height="6" rx="2" fill="#dc4b4b"/><path d="M10.500 12h4" stroke="#fff" stroke-width="1.500"/>'
].map(p=>p?`<svg viewBox="0 0 16 16">${p}</svg>`:'<span class="drop off" style="margin:0 -5px 0 -5px"></span>').join('');
document.querySelectorAll('.chk').forEach(c=>c.innerHTML='<svg width="11" height="11" viewBox="0 0 11 11"><path d="M2 5l2.500 4L9 1.500" fill="none" stroke="#000" stroke-width="1.900"/></svg>');

// ---- map: district boundaries, each group drawn at three units per pixel from its own origin ----
let seed=7;const rnd=()=>(seed=(seed*16807)%2147483647)/2147483647;
const O={A:[590,170],B:[910,170],C:[590,430],D:[880,430]};
const pts=(k,s)=>s.trim().split(/\s+/).map(p=>{const [x,y]=p.split(',').map(Number);return [O[k][0]+x/3,O[k][1]+y/3]});
const rough=(P,a)=>{let d='M'+P[0].map(v=>v.toFixed(1));for(let i=1;i<P.length;i++){const [x,y]=P[i-1],[u,v]=P[i],L=Math.hypot(u-x,v-y),n=Math.max(1,Math.round(L/3.200));for(let j=1;j<=n;j++){const t=j/n,w=j<n?(rnd()-.5)*a:0;d+='L'+(x+(u-x)*t-(v-y)/L*w).toFixed(1)+','+(y+(v-y)*t+(u-x)/L*w).toFixed(1)}}return d};
const outline=[
['A','43,788 90,784 98,765 103,745 98,728 110,715 118,700 132,688 132,668 150,662 165,660 178,645 180,628 187,620 173,606 172,590 180,575 205,575 213,545 205,530 198,515 200,490 195,470 162,438 172,400 182,380 180,370 188,360 182,345 188,325 187,245 235,210 262,165 265,140 264,98 278,98 320,63 380,52 430,58 440,55 455,42 480,36 510,48 555,65 580,75 600,72 615,78 640,98 662,125 670,148 693,177 715,178 740,162 775,158 832,125 870,130 890,142 920,165 935,170 960,190'],
['B','50,203 158,206 205,152 240,136 275,132 310,122 395,117 430,118 490,135 530,160 545,153 590,162 600,135 630,125 645,98 660,92 700,88 712,65 722,59 765,60 835,155 845,200 853,240 850,265 895,268 910,285 928,297 925,320 918,345 915,365 928,385 920,405 858,443 828,438 815,445 800,480 785,490 783,515 765,535 760,570 750,595 735,625 715,628 712,650 720,670 708,710 670,735 652,745 662,750 662,780 652,808'],
['D','742,30 738,55 725,62 720,75 690,85 685,95 655,108 650,145 648,180 620,220 612,260 600,270 588,300 592,320 572,332 548,350 550,380 535,400 515,412 475,412 470,385 445,382 432,362 430,345 405,330 392,315 388,345 380,352 332,352 325,330 290,362 265,375 255,412 235,415 215,425 210,443 195,445 190,462 140,503 120,525 120,548 130,560 118,590 115,620 100,640 85,675 75,690 62,697 50,685 40,690 38,715 30,725 0,722'],
['C','800,730 740,745 720,748 715,740 640,752 560,766 530,755 500,730 470,690 455,650 440,600 415,570 400,535 350,475 310,440 270,432 225,427 150,425 70,430 25,430 27,400 30,370 25,350 38,335 35,270 35,230 25,190 33,170 30,150 35,135 28,115 38,90 35,60 43,10 43,8']];
const inner={
A:`265,138 300,140 330,158 362,165;380,52 370,90 362,165 370,190 390,190 405,165 425,150;430,58 428,110 425,150;480,36 480,70 495,95 470,98 462,82 450,98 430,100;555,65 543,90 560,115 600,128 645,130 660,122;543,90 552,120 552,150 562,175 560,215;362,130 395,130 405,145 425,150 430,128 455,130 510,125 525,135 500,140 480,140 465,155 440,170 425,150;495,95 510,85 513,105 520,85 543,90;430,115 455,130 470,112 495,95;465,155 480,175 490,200 508,215 565,215 585,240 565,255 550,270 555,300 580,305 585,265 600,265;465,155 520,145 552,160;552,165 600,170 598,152 640,160 670,150;600,170 610,180 625,180 650,165 655,185 650,195 620,195 615,210 625,225 665,232 680,238 717,235;715,178 717,235 718,280 725,310 750,370 760,410 780,430;330,158 310,205 270,240 240,275 225,280 215,310 187,322;310,205 345,210 370,225 330,250 290,250 270,240;370,190 368,225 385,265 395,250 415,255 435,290;370,190 395,200 415,190 415,220 400,230 375,210;415,220 445,230 455,190 440,170;445,230 485,230 508,215;245,262 285,280 320,275 335,300 335,270 370,265;330,250 335,270;335,300 335,350 328,400 325,440 310,460 285,460;285,280 265,310 250,335 230,330 215,310 230,288 265,300;250,335 250,390 235,408 205,400 175,382;187,322 215,320 245,335;265,310 285,350 275,395;245,408 290,385 330,380;290,290 305,350 328,355;300,290 335,300;335,320 370,305 400,295 485,292 485,230;447,230 447,290;400,292 402,380;330,405 350,390 400,380 455,380 460,395;410,380 415,405 445,405 460,385;485,292 530,285 540,320 535,390 465,390;485,292 470,330 468,390;485,285 550,282;535,390 580,388 605,360 585,345 583,300;605,360 620,355 635,320 645,290 660,310 665,320;620,225 622,260 610,270 615,330 605,360;645,290 635,265 620,258;655,290 718,280;680,238 675,310;665,320 655,350 665,375 690,380 690,370 730,365 750,370;665,320 690,312 725,315;605,360 610,382 640,390 670,420 685,440 665,470 650,485 600,490 572,515;535,390 533,430 550,470 572,515 570,560;455,395 455,425 505,455 520,480 550,470;520,480 465,495 450,490 452,530 400,535;450,490 460,460 445,435 370,445 360,465 400,480 410,500 400,520 405,535;455,425 480,400 533,430;330,405 375,445;195,470 240,485 293,485 350,500 355,540 340,560 298,560 300,520 293,485;285,390 300,430 285,460 330,485 370,500 400,520;325,440 355,470 375,495 360,540 345,540;452,530 485,540 500,610 430,603;365,545 400,535;355,540 365,545 370,590 345,615 325,630 315,565 340,560;445,535 445,590 415,603;430,603 380,620 375,650 345,650 328,690 325,630;500,610 545,640 550,580 570,560;555,575 575,595 600,575 625,555 665,550;625,555 630,575 610,600 610,625 628,640 620,670 578,665 540,670 545,640;187,620 232,620 300,690 305,730 328,735;213,620 208,772;216,620 211,772;328,690 325,735;208,772 235,795 265,805 350,780 400,785;208,772 195,795 150,808;540,670 520,690 440,690 435,720 375,745 355,720 332,712 328,735 350,765 355,785 290,795;470,690 515,725 525,715 575,720 580,665;435,720 460,755 465,790 500,795 515,808 520,725;580,690 640,685 645,715 620,725 575,720;620,708 627,702 635,708 627,715 620,708;680,520 665,550 690,565 710,600 690,635 750,645 800,625 855,640;680,520 730,540 740,580 775,575 830,570 855,545 910,547;765,575 768,550 777,550 775,575;690,635 672,655 672,720 645,720;745,645 748,690 720,700 720,715 672,720;800,625 810,600 830,570;855,545 865,580 885,615 888,628 855,640 860,680 870,720;888,628 920,620 935,655 930,690 870,720 810,705 750,715 740,760;910,547 950,545 975,550 970,600 960,655 935,655;910,547 920,590 920,620;830,465 830,520 855,545;730,520 760,490 825,490;830,465 880,465 895,500 880,520 865,545;880,465 910,475 940,475 945,500 940,540;665,470 700,500 735,475;685,440 705,425 760,440 770,470 735,480 740,500 725,520 730,540;690,380 690,410 705,425 715,410 750,405;620,725 620,765 660,770 665,808;645,720 660,750 720,740 740,760;560,720 570,760 595,770 590,808;540,725 545,770 530,808;375,745 375,808;572,515 570,560`,
B:`240,136 238,180 165,205 175,240 160,280 100,290;158,206 168,235 150,270;175,240 235,225 235,240 215,265 180,270;240,165 260,160 285,175 290,205 245,210 238,180;245,210 258,215 255,270 230,270;290,205 300,240 295,260 258,270;395,117 405,150 420,178 365,195 365,205 300,210 290,205;285,180 330,185 365,195;300,180 310,165 335,165 340,182;365,205 370,230 405,270 370,325 340,350 330,310 320,275 295,250 290,210;300,225 360,205 385,235 388,255 370,245 362,215;420,178 465,182 475,210 480,240 465,262 405,270;470,205 500,185 570,178;465,262 480,275 562,270 588,240 588,220 570,178 572,162;588,240 655,265;588,220 640,180 655,165;640,110 680,140 705,158 725,155;655,165 690,158 725,155;722,59 730,110 725,155 740,200 765,220 793,215;728,115 750,125 770,145 785,160 793,155 802,155 793,175 793,215;793,160 790,235 820,250 850,255;655,165 680,200 670,225 658,265 700,285 715,310 720,340;680,200 700,195 710,215 740,235 765,220;740,235 720,250 720,310;790,225 785,255 760,265 755,285 790,305 840,300;850,265 837,300 855,320 890,320;895,268 890,350 870,365 805,370;890,350 918,365;815,310 810,360 800,370;565,260 562,340 555,385 485,405 485,345 470,340;562,330 500,338 440,330 420,300 405,270;562,340 625,345 635,355 670,345 685,310 700,300 705,355 735,365 800,360;690,375 700,355 715,372 735,350 728,375 690,375;630,360 630,420 640,445 665,455 700,420 740,438;555,385 575,400 600,430 640,445;575,400 548,440 548,480;740,438 755,412 795,405 800,370;755,410 825,435;740,438 740,495 783,490;740,495 735,520 760,535;735,520 722,600 718,640 708,710;735,520 690,515 680,490 650,488 620,505 612,525 570,490 548,480 490,510 490,550;612,525 690,535 690,515;612,520 620,545 600,560 570,545 535,555 500,540 455,550;455,460 500,465 530,485 548,480;455,435 450,490 455,550;485,405 455,435 420,420 410,365 375,375 370,400 410,390;370,325 375,350 410,365;470,340 440,330;340,350 355,400 360,440 400,435 450,490 395,512 365,480 360,440;355,410 370,400;395,512 395,540 455,550;370,535 400,545;370,535 365,580 400,598 455,555;15,530 35,522 50,532 147,520 150,470 155,380;147,520 145,560 190,580 250,575 300,540 290,515 310,510 330,470 360,440;155,380 180,350 275,350 285,360 255,368 155,380;150,455 185,455 190,490 240,495 250,480 270,460 320,430 355,425;255,480 290,515;145,560 155,590 150,640 200,675 210,645 255,640 258,600 250,575;258,600 320,622 340,610 340,580 365,580;320,622 365,665 370,705;200,675 300,725 370,710 445,710 500,700 530,700;300,725 300,760 310,808;190,780 235,730 300,740;400,598 450,645 465,635 510,640 510,690 445,710;365,665 400,645 430,645 410,670 430,690 428,710;430,645 475,665 470,685 430,690;410,670 375,690;475,555 465,590 495,615 500,635 545,640 580,600 578,640 570,670 575,705 530,700 530,640;495,550 505,605 535,600 535,570 530,555;535,600 580,600 620,595 625,570 600,550;505,605 495,615;580,637 665,640 680,648 715,640;625,570 660,610 668,645;625,575 650,552 720,572;725,570 755,572;650,685 708,710;650,685 635,715 585,712 575,705 580,740 600,760 630,770;445,710 470,740 530,735 530,705;540,700 540,735 500,740;365,808 390,785 465,740;495,745 495,775 545,775 560,770 600,755;635,715 630,785 595,780 590,768;495,775 470,790 400,800;15,450 10,500 20,560 20,600;15,440 60,440 150,450;265,300 290,280 320,280;265,300 270,340 285,360;255,368 300,385 335,375 355,410;300,385 300,415 260,410 250,440 270,460;305,420 355,415`,
C:`43,90 90,60 135,50 180,30 265,10;35,108 140,115 190,130 205,90 220,80 265,80 265,60 330,20 370,0;35,145 120,145 170,120 200,140 190,200;140,60 140,115;180,30 205,60 205,90;265,60 300,75 330,100 345,160 320,190;375,0 390,40 450,75 475,60;475,60 470,100 560,120 575,65 540,60 475,55 420,25;265,80 290,150 280,200;310,95 350,110 385,75 345,90 300,75;365,125 410,125 415,145 385,155 365,125;662,0 662,105;668,0 668,105;662,105 655,155 660,220 655,340 650,380 665,430;575,65 610,110 655,155 695,120 770,110 785,60 790,0;665,95 695,120 695,200;695,200 765,175 770,110;785,60 880,95 890,125 870,130 885,150 870,190;765,175 870,195 905,220;660,220 695,200;755,190 760,240 745,280 710,265 685,275 665,265 690,240 755,215;805,185 805,240 780,280 745,280;805,240 865,245 880,205;865,245 880,270 920,340;660,295 740,300 775,280 870,290;560,120 605,130 615,160 590,180 610,205 575,175 590,200;555,125 555,180 560,230;500,250 560,245 610,205 660,220;435,250 500,255 560,255 610,275 650,240;530,140 505,180 510,200;145,383 240,383;145,386 240,386;50,410 130,408 270,425 240,383`,
D:`270,0 270,60 310,90 350,68;310,90 265,120 240,125;350,68 440,62 460,15 480,5;400,0 400,50 350,68;300,140 350,80 345,60;445,55 490,88 545,78 588,75;480,15 515,25 550,75;500,20 545,75;515,25 585,10 605,45 588,75;560,20 588,75;588,75 520,170 480,180 435,230 465,280 465,310 430,345;520,170 545,205 565,190 590,220 600,265;565,122 620,145 648,143;588,75 615,85 620,105 655,108;625,15 660,55 738,50;660,45 640,60 635,105;690,5 720,5;485,88 365,188 350,155 300,140;365,188 360,225 375,250 435,230;435,230 370,293 345,293 345,265 320,245 270,240;300,140 265,172 200,180 165,200;350,160 270,237 230,205 165,205;270,240 240,272 205,235 205,205;270,240 285,270 282,300 345,293 325,330;282,300 240,315 230,335 210,325 190,310 185,255 205,245;465,280 485,280 495,310 520,325 572,330;282,300 255,340 250,412;230,335 175,365 200,390 215,425;130,370 135,350 165,345 170,385 130,390 130,370;120,390 120,420 145,425 190,420 190,445;100,440 105,470 115,490 80,530;115,490 140,503;120,410 100,440 60,440;0,545 55,535 120,548;0,545 20,580 5,610 60,655 95,655;190,105 230,115 240,125 200,130 200,175 165,190;190,0 195,50 190,105 140,105 130,60 150,30 165,0;195,25 255,40 260,60 270,60;255,60 250,100 265,120;65,120 140,120 140,140 65,140 60,110;65,140 65,165 150,175 165,195 150,210 150,235;0,95 60,110 90,105 140,120 140,105;140,140 140,175;65,165 45,175 50,210;50,225 57,210 72,205 88,210 95,228 88,243 72,251 57,245 50,225;95,240 150,235 190,255;50,245 10,280;95,240 82,290 60,340;85,290 105,320 130,305 150,325 190,320;110,240 110,260 160,265 170,290 150,305;0,345 50,340 85,365 130,370 65,415 50,440;0,375 45,375 60,440;10,280 30,320 50,340;0,200 30,210 50,225;0,440 40,440 50,450 0,500;60,440 65,490 60,535;30,520 65,490`};
// closely packed districts: origin, cell size, region
const packs=[['A',29,'725,185 870,140 985,200 985,300 870,300 870,400 985,400 985,470 900,470 780,430 750,370 722,300'],['A',21,'870,300 985,300 985,400 870,400'],['A',17,'370,150 450,140 450,200 370,200'],['A',34,'750,720 870,720 935,655 985,650 985,808 680,808 680,770'],['A',34,'570,70 600,75 640,120 570,110'],
['B',33,'0,210 150,215 260,290 260,345 150,380 145,430 15,440'],['B',24,'160,385 260,385 250,450 160,450'],['B',34,'20,600 145,640 190,680 190,808 0,808'],
['C',36,'40,150 190,150 190,280 190,415 40,415'],['C',25,'190,160 300,130 400,150 490,170 490,250 400,300 390,340 190,370'],['C',15,'290,190 370,180 350,300 310,300'],['C',36,'240,345 400,345 400,500 350,470 310,430 240,420'],['C',32,'390,260 650,280 650,690 530,710 480,690 440,590 390,500'],['C',14,'115,375 135,375 140,425 115,425'],['C',13,'200,255 225,255 225,285 200,285'],['C',28,'660,310 760,300 880,310 900,450 860,560 870,640 900,720 655,700'],['C',15,'665,460 720,470 760,560 740,580 700,560'],['C',12,'430,520 480,535 525,580 500,600 450,600 415,570'],['C',9,'545,730 580,700 650,710 640,752 560,762'],['C',7,'650,685 720,680 790,725 740,742 650,742'],['C',14,'490,705 580,730 560,762 520,745'],['C',15,'810,620 850,610 880,690 830,690'],['C',38,'490,0 655,0 655,110 600,80 490,55'],['C',42,'675,5 780,5 775,100 675,90'],['C',42,'800,0 985,0 985,100 880,90 800,50'],['D',34,'0,0 130,0 130,100 0,90'],['D',26,'0,380 40,380 50,480 0,530'],['D',16,'0,620 60,660 40,715 0,720']];
let lines='',k3=1/3;
for(const k in inner)inner[k].split(';').forEach(s=>lines+=rough(pts(k,s),1.500));
const inside=(p,P)=>{let c=false;for(let i=0,j=P.length-1;i<P.length;j=i++){const a=P[i],b=P[j];if((a[1]>p[1])!==(b[1]>p[1])&&p[0]<(b[0]-a[0])*(p[1]-a[1])/(b[1]-a[1])+a[0])c=!c}return c};
packs.forEach(([k,size,s])=>{const P=pts(k,s),c=size*k3,xs=P.map(p=>p[0]),ys=P.map(p=>p[1]),x0=Math.min(...xs)-c,y0=Math.min(...ys)-c,nx=Math.ceil((Math.max(...xs)-x0)/c*1.500)+2,ny=Math.ceil((Math.max(...ys)-y0)/c)+2,V=[];
  for(let j=0;j<ny;j++){V[j]=[];for(let i=0;i<nx;i++)V[j][i]=[x0+i*c/1.500+(rnd()-.5)*c*.65,y0+j*c+((i+j)%2?c*.1:-c*.1)+(rnd()-.5)*c*.9]}
  const edge=(a,b)=>{if(inside([(a[0]+b[0])/2,(a[1]+b[1])/2],P))lines+=rough([a,b],2.200)};
  for(let j=0;j<ny;j++)for(let i=0;i<nx;i++){if(i+1<nx)edge(V[j][i],V[j][i+1]);if(j+1<ny&&(i+j)%2)edge(V[j][i],V[j+1][i])}
});
const shape=rough(outline.flatMap(([k,s])=>pts(k,s)),.9)+'Z';
document.getElementById('map').innerHTML=`<clipPath id="land"><path d="${shape}"/></clipPath><path d="${shape}" fill="#e4b536"/><path d="${lines}" clip-path="url(#land)" fill="none" stroke="#302e24" stroke-width=".95" stroke-linejoin="round"/><path d="${shape}" fill="none" stroke="#302e24"/>`;
// fit each label to its own width
document.querySelectorAll('.fit').forEach(e=>{const w=+e.dataset.w,n=e.textContent.length;e.style.letterSpacing=((w-e.getBoundingClientRect().width)/n)+'px'});
</script>
</body>
</html>
